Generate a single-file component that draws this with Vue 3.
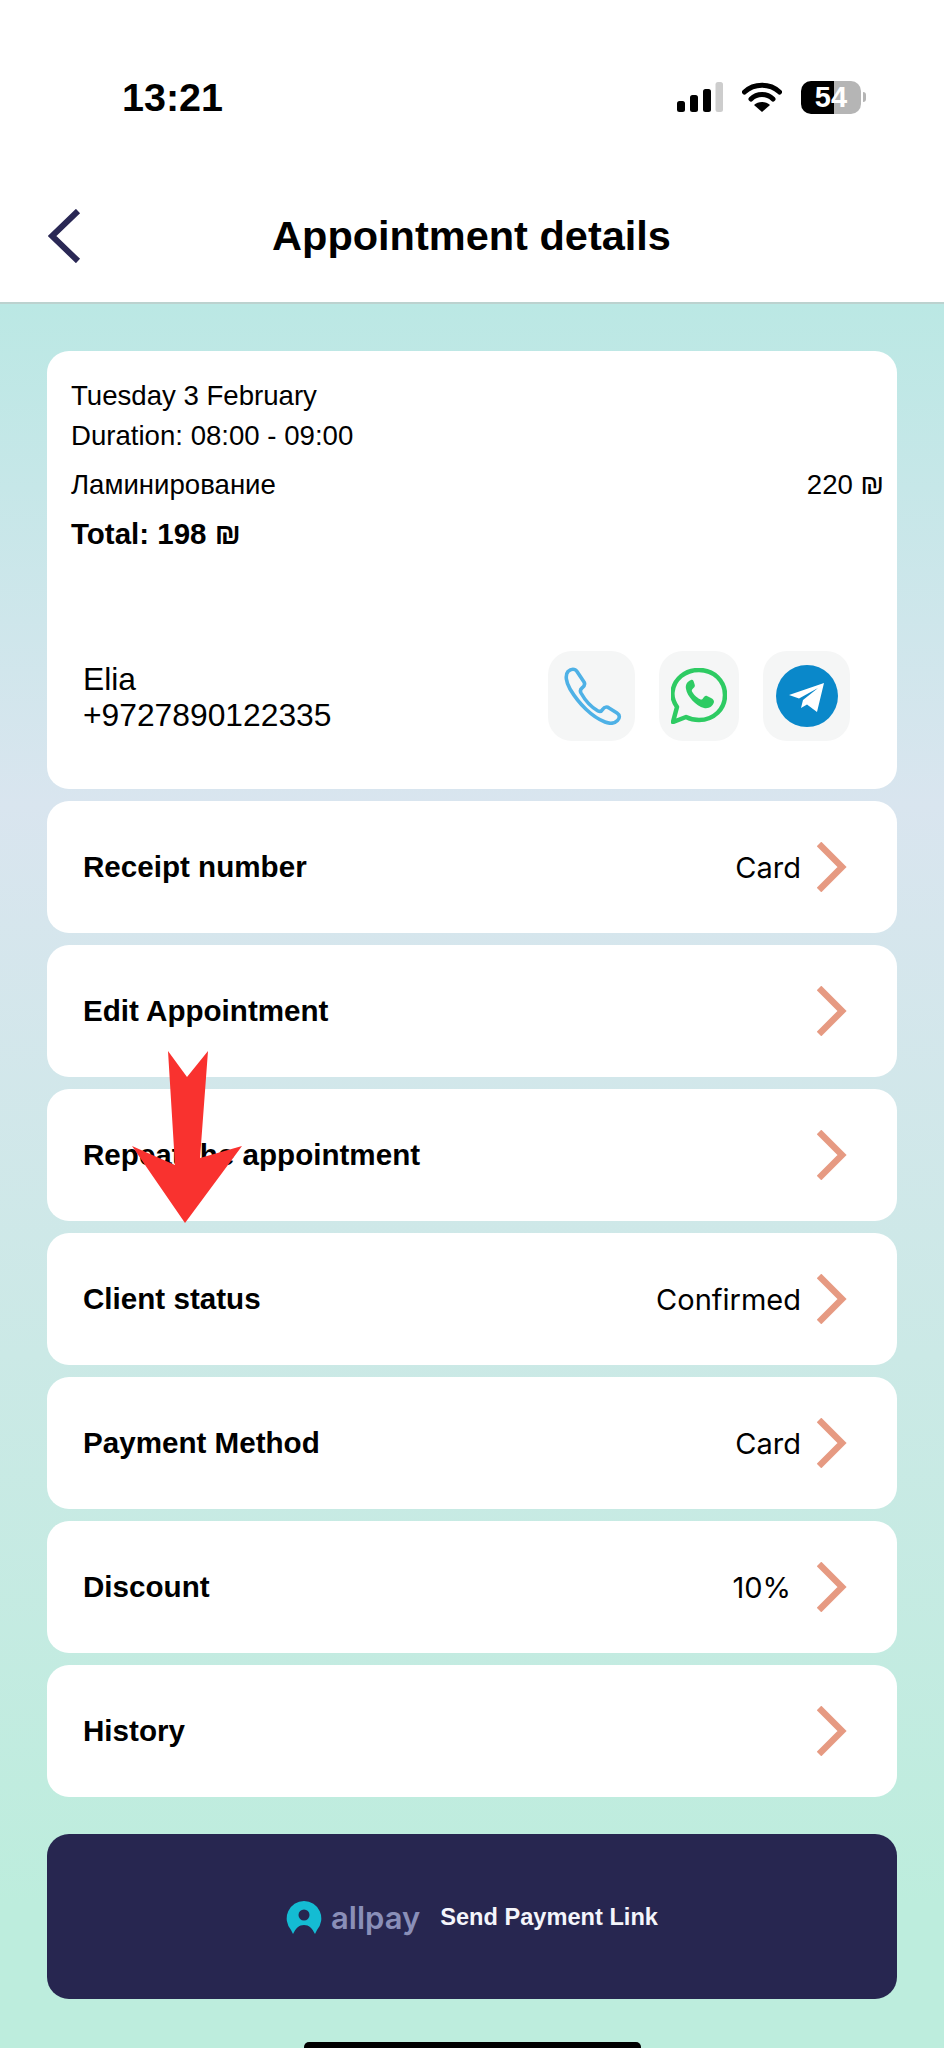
<script setup>
const rows = [
  { label: 'Receipt number', value: 'Card' },
  { label: 'Edit Appointment', value: '' },
  { label: 'Repeat the appointment', value: '' },
  { label: 'Client status', value: 'Confirmed' },
  { label: 'Payment Method', value: 'Card' },
  { label: 'Discount', value: '10%', narrow: true },
  { label: 'History', value: '' }
]
</script>

<template>
  <div class="screen">
    <header class="top">
      <div class="status">
        <span class="time">13:21</span>
        <div class="status-icons">
          <svg width="46" height="30" viewBox="0 0 46 30">
            <rect x="0" y="19" width="8" height="11" rx="2.5" fill="#000" />
            <rect x="13" y="13" width="8" height="17" rx="2.5" fill="#000" />
            <rect x="26" y="7" width="8" height="23" rx="2.5" fill="#000" />
            <rect x="38.500" y="0" width="7.500" height="30" rx="2.5" fill="#cdcdcd" />
          </svg>
          <svg class="wifi" width="40" height="30" viewBox="0 0 40 30">
            <path d="M2.500 10 C12 1 28 1 37.500 10" fill="none" stroke="#000" stroke-width="5" stroke-linecap="round" />
            <path d="M9 17 C15 11 25 11 31 17" fill="none" stroke="#000" stroke-width="5" stroke-linecap="round" />
            <path d="M20 30 L12 23 C16 19 24 19 28 23 Z" fill="#000" />
          </svg>
          <div class="battery">
            <div class="battery-body"><span>54</span></div>
            <i class="battery-cap"></i>
          </div>
        </div>
      </div>
      <div class="nav">
        <svg class="back" width="34" height="54" viewBox="0 0 34 54">
          <path d="M30 2 L4 27 L30 52" fill="none" stroke="#2a2855" stroke-width="6" />
        </svg>
        <h1>Appointment details</h1>
      </div>
    </header>

    <main class="content">
      <section class="card">
        <div class="info">
          <p class="line">Tuesday 3 February</p>
          <p class="line">Duration: 08:00 - 09:00</p>
          <p class="line service"><span>Ламинирование</span><span>220 ₪</span></p>
          <p class="line total">Total: 198 ₪</p>
        </div>
        <div class="client">
          <div class="client-text">
            <div>Elia</div>
            <div>+9727890122335</div>
          </div>
          <div class="contacts">
            <div class="contact">
              <svg width="60" height="58" viewBox="0 0 60 58">
                <path d="M6 4.5 C9 1.5 13 1.5 15 4.5 L22 15 C23.5 17.5 22 19.5 20 21 C18 22.500 18 24 19 26 C24 35 29 40 36 44 C38 45 39.500 44.500 41 42 C42.500 40 45 39.500 47 41 L55 46 C58 48 58 51 55.500 53.500 C52 57 48 57 43 55 C30 50 17 37 8 22 C4 15 3 8 6 4.500 Z" fill="none" stroke="#4eb1e6" stroke-width="3.600" stroke-linejoin="round" />
              </svg>
            </div>
            <div class="contact whatsapp">
              <svg width="56" height="56" viewBox="0 0 56 56">
                <path d="M2 54 L6 39 C2 33 1 28 1.500 24 C3 11 14 2 28 2 C43 2 54 13 54 27 C54 41 43 52 28 52 C23 52 19 51 15 49 Z" fill="none" stroke="#2ecb63" stroke-width="4.500" stroke-linejoin="round" />
                <path d="M20 12 C17 13 14 16 15 21 C16 28 25 38 33 40 C38 41 42 38 43 34 C43 32 42 31 40 30 L36 28 C35 27.500 34 28 33 29 L31.500 31 C30.500 32 29 31.500 27 30 C24 28 22.500 26 21 23.500 C20.500 22.500 21 21.500 22 20.500 L23.500 19 C24 18 24 17 23.500 16 L22.500 13 C22 12 21 11.500 20 12 Z" fill="#2ecb63" />
              </svg>
            </div>
            <div class="contact">
              <svg width="62" height="62" viewBox="0 0 62 62">
                <circle cx="31" cy="31" r="31" fill="#0a88ca" />
                <path d="M13 30 L48 18 L41 47 L31 39.500 L25 43 L27 35 L42 23 L23 33.500 Z" fill="#fff" />
              </svg>
            </div>
          </div>
        </div>
      </section>

      <div v-for="row in rows" :key="row.label" class="row">
        <span class="row-label">{{ row.label }}</span>
        <div class="row-right">
          <span v-if="row.value" class="row-value" :class="{ narrow: row.narrow }">{{ row.value }}</span>
          <svg width="30" height="50" viewBox="0 0 30 50">
            <path d="M2 2 L25 25 L2 48" fill="none" stroke="#e69a82" stroke-width="6.500" />
          </svg>
        </div>
      </div>

      <div class="pay">
        <svg width="36" height="34" viewBox="0 0 36 34">
          <path d="M18 0 A17.500 17.500 0 0 1 31 29 L29 33 C26 27 23 24 18 24 C13 24 10 27 7 33 L5 29 A17.500 17.500 0 0 1 18 0 Z" fill="#14bcd3" />
          <circle cx="18" cy="14" r="5.500" fill="#272650" />
        </svg>
        <span class="brand">allpay</span>
        <span class="pay-text">Send Payment Link</span>
      </div>
      <div class="home"></div>

      <svg class="arrow" width="112" height="176" viewBox="0 0 112 176">
        <path d="M37 1 L56 27 L77 1 L69 108 L111 96 L54 173 L1 96 L44 115 Z" fill="#f9322f" />
      </svg>
    </main>
  </div>
</template>

<style>
body {
  background: #bdeddd;
}
</style>

<style scoped>
.screen {
  width: 944px;
  height: 2048px;
  overflow: hidden;
  display: flex;
  flex-direction: column;
  font-family: "Liberation Sans", Arial, sans-serif;
  color: #000;
}
.top {
  flex: none;
  height: 304px;
  box-sizing: border-box;
  background: #fff;
  border-bottom: 2px solid #bcd2cf;
}
.status {
  display: flex;
  justify-content: space-between;
  align-items: center;
  padding: 77px 0 0 122px;
  height: 40px;
}
.time {
  font-size: 39.500px;
  font-weight: 700;
  line-height: 40px;
}
.status-icons {
  display: flex;
  align-items: center;
  gap: 19px;
  padding-right: 78px;
}
.battery {
  display: flex;
  align-items: center;
  gap: 2px;
}
.battery-body {
  width: 60px;
  height: 33px;
  border-radius: 10px;
  background: linear-gradient(to right, #000 55%, #b5b5b5 55%);
  color: #fff;
  font-size: 29px;
  font-weight: 700;
  line-height: 33px;
  text-align: center;
}
.battery-cap {
  width: 3px;
  height: 10px;
  border-radius: 0 3px 3px 0;
  background: #b5b5b5;
}
.nav {
  position: relative;
  display: flex;
  justify-content: center;
  margin-top: 92px;
  padding-right: 1px;
}
.back {
  position: absolute;
  left: 48px;
  top: 0;
}
h1 {
  margin: 0;
  font-size: 41.500px;
  line-height: 54px;
  font-weight: 700;
}
.content {
  position: relative;
  flex: 1;
  min-height: 0;
  box-sizing: border-box;
  padding: 47px 47px 0;
  display: flex;
  flex-direction: column;
  gap: 12px;
  background: linear-gradient(to bottom, #bbe8e4 0, #d9e5ef 500px, #bdeddd 1600px, #bdeddd 100%);
}
.card {
  flex: none;
  height: 438px;
  box-sizing: border-box;
  border-radius: 22px;
  background: #fff;
  padding: 25px 13px 0 24px;
  font-size: 27.600px;
}
.line {
  margin: 0;
  line-height: 40px;
}
.service {
  display: flex;
  justify-content: space-between;
  margin-top: 9px;
}
.total {
  margin-top: 9px;
  font-weight: 700;
  font-size: 29.500px;
}
.client {
  display: flex;
  justify-content: space-between;
  align-items: center;
  margin-top: 97px;
  padding: 0 34px 0 12px;
}
.client-text {
  padding-top: 2px;
  font-size: 31.800px;
  line-height: 36px;
}
.contacts {
  display: flex;
  gap: 24px;
}
.contact {
  width: 87px;
  height: 90px;
  border-radius: 24px;
  background: #f5f6f6;
  display: flex;
  align-items: center;
  justify-content: center;
}
.whatsapp {
  width: 80px;
}
.row {
  flex: none;
  height: 132px;
  border-radius: 22px;
  background: #fff;
  display: flex;
  align-items: center;
  justify-content: space-between;
  padding: 0 50px 0 36px;
}
.row-label {
  font-size: 29.600px;
  font-weight: 700;
}
.row-right {
  display: flex;
  align-items: center;
  gap: 16px;
}
.row-value {
  font-family: Inter, "Liberation Sans", sans-serif;
  font-size: 29px;
}
.row-value.narrow {
  margin-right: 10px;
}
.pay {
  flex: none;
  height: 165px;
  box-sizing: border-box;
  padding-top: 2px;
  margin-top: 25px;
  border-radius: 22px;
  background: #272650;
  display: flex;
  align-items: center;
  justify-content: center;
}
.brand {
  margin-left: 9px;
  font-family: Inter, sans-serif;
  font-weight: 600;
  font-size: 31px;
  color: #8a8fb8;
}
.pay-text {
  margin-left: 20px;
  color: #f4f5fb;
  font-size: 23.600px;
  font-weight: 700;
}
.home {
  flex: none;
  width: 337px;
  height: 10px;
  border-radius: 5px 5px 0 0;
  background: #000;
  margin: 31px auto 0;
}
.arrow {
  position: absolute;
  left: 131px;
  top: 746px;
}
</style>
